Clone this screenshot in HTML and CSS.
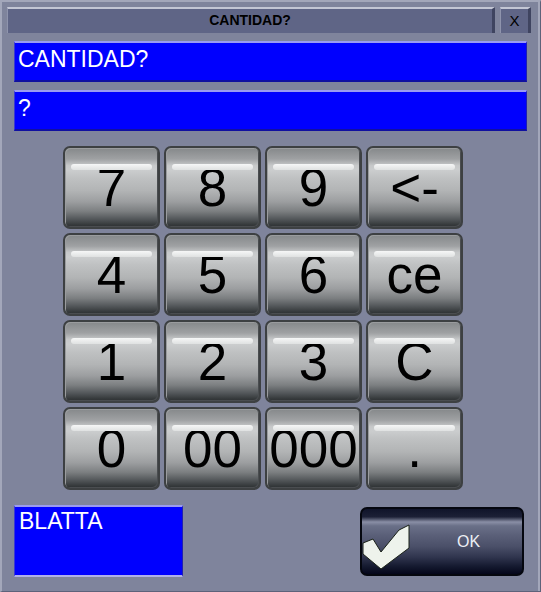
FILE: index.html
```html
<!DOCTYPE html>
<html>
<head>
<meta charset="utf-8">
<link rel="stylesheet" href="styles.css">
</head>
<body>
<div class="window">
  <div class="titlebar">
    <div class="title">CANTIDAD?</div>
    <div class="close">X</div>
  </div>
  <div class="field">CANTIDAD?</div>
  <div class="field field-second">?</div>
  <div class="keypad">
    <div class="key">7</div>
    <div class="key">8</div>
    <div class="key">9</div>
    <div class="key">&lt;-</div>
    <div class="key">4</div>
    <div class="key">5</div>
    <div class="key">6</div>
    <div class="key">ce</div>
    <div class="key">1</div>
    <div class="key">2</div>
    <div class="key">3</div>
    <div class="key">C</div>
    <div class="key">0</div>
    <div class="key">00</div>
    <div class="key">000</div>
    <div class="key">.</div>
  </div>
  <div class="bottom">
    <div class="info">BLATTA</div>
    <div class="ok">
      <svg class="check" width="52" height="60" viewBox="0 0 52 60">
        <polygon points="1,29 11,25 19,38 37,16 47,11 47,34 19,55 1,40" fill="#eef3ec" stroke="#1a2218" stroke-width="1"/>
      </svg>
      <span class="ok-label">OK</span>
    </div>
  </div>
</div>
</body>
</html>
```
FILE: styles.css
```css
html, body {
  margin: 0;
  padding: 0;
}
body {
  width: 541px;
  height: 592px;
  background: #7f849c;
  font-family: "Liberation Sans", Arial, sans-serif;
  overflow: hidden;
}
.window {
  box-sizing: border-box;
  width: 541px;
  height: 592px;
  padding: 0;
  border-top: 2px solid #a3a7ba;
  border-left: 2px solid #a3a7ba;
  border-right: 1px solid #5d627a;
  border-bottom: 1px solid #5d627a;
  box-shadow: inset -10px -7px 0 -8px #a3a7ba;
  background: #7f849c;
}
.titlebar {
  display: flex;
  gap: 5px;
  height: 26px;
  margin: 5px 0 0 5px;
}
.title, .close {
  box-sizing: border-box;
  height: 26px;
  background: #5f6586;
  border-top: 2px solid #c3c6d4;
  border-left: 1px solid #8f94ad;
  border-right: 3px solid #3f4460;
  color: #000;
  font-size: 14px;
  font-weight: bold;
  line-height: 23px;
  text-align: center;
}
.title {
  width: 488px;
}
.close {
  width: 31px;
  font-size: 15px;
  font-weight: normal;
}
.field {
  box-sizing: border-box;
  width: 513px;
  height: 41px;
  margin: 8px 0 0 12px;
  background: #0000fe;
  border-top: 2px solid #9b9bf0;
  border-left: 1px solid #3a3ad0;
  border-right: 1px solid #2020b0;
  border-bottom: 2px solid #1010a0;
  color: #fff;
  font-size: 23px;
  line-height: 33px;
  padding-left: 3px;
}
.field-second {
  margin-top: 8px;
}
.keypad {
  display: grid;
  grid-template-columns: repeat(4, 97px);
  grid-template-rows: repeat(4, 83px);
  gap: 4px;
  margin: 15px 0 0 61px;
}
.key {
  position: relative;
  box-sizing: border-box;
  border: 2px solid #3d4042;
  border-radius: 7px;
  background: linear-gradient(to bottom,
    #85888a 0%, #9fa1a3 14%, #c6c8c9 22%, #cbcdce 28%,
    #bfc1c2 38%, #b2b4b5 54%, #9c9ea0 68%, #7c7f81 80%,
    #53575a 90%, #363a3c 97%, #2d3032 100%);
  box-shadow: inset 1px 1px 0 #9a9c9e, inset -1px -1px 0 #4a4d50;
  color: #000;
  font-size: 53px;
  line-height: 79px;
  text-align: center;
  overflow: hidden;
}
.key::before {
  content: "";
  position: absolute;
  left: 6px;
  right: 6px;
  top: 16px;
  height: 6px;
  border-radius: 3px;
  background: linear-gradient(to bottom, #f6f7f7, #dfe1e1);
}
.bottom {
  display: flex;
  justify-content: space-between;
  align-items: flex-start;
  margin: 15px 0 0 12px;
  width: 510px;
}
.info {
  box-sizing: border-box;
  width: 169px;
  height: 72px;
  background: #0000fe;
  border-top: 2px solid #9b9bf0;
  border-left: 1px solid #3a3ad0;
  border-right: 1px solid #2020b0;
  border-bottom: 2px solid #b0b0e8;
  color: #fff;
  font-size: 23px;
  line-height: 28px;
  padding-left: 4px;
}
.ok {
  position: relative;
  box-sizing: border-box;
  width: 164px;
  height: 69px;
  margin-top: 2px;
  border: 2px solid #05070f;
  border-radius: 7px;
  background: linear-gradient(to bottom,
    #10142a 0%, #1c2036 12%, #8a8fa6 20%, #6a7088 26%,
    #5b6079 40%, #4a4f68 58%, #30354e 74%, #151a30 88%, #04061a 100%);
  display: flex;
  align-items: center;
  overflow: hidden;
}
.check {
  position: absolute;
  left: 0;
  top: 5px;
}
.ok-label {
  margin-left: 95px;
  color: #eceef4;
  font-size: 16px;
}
```
